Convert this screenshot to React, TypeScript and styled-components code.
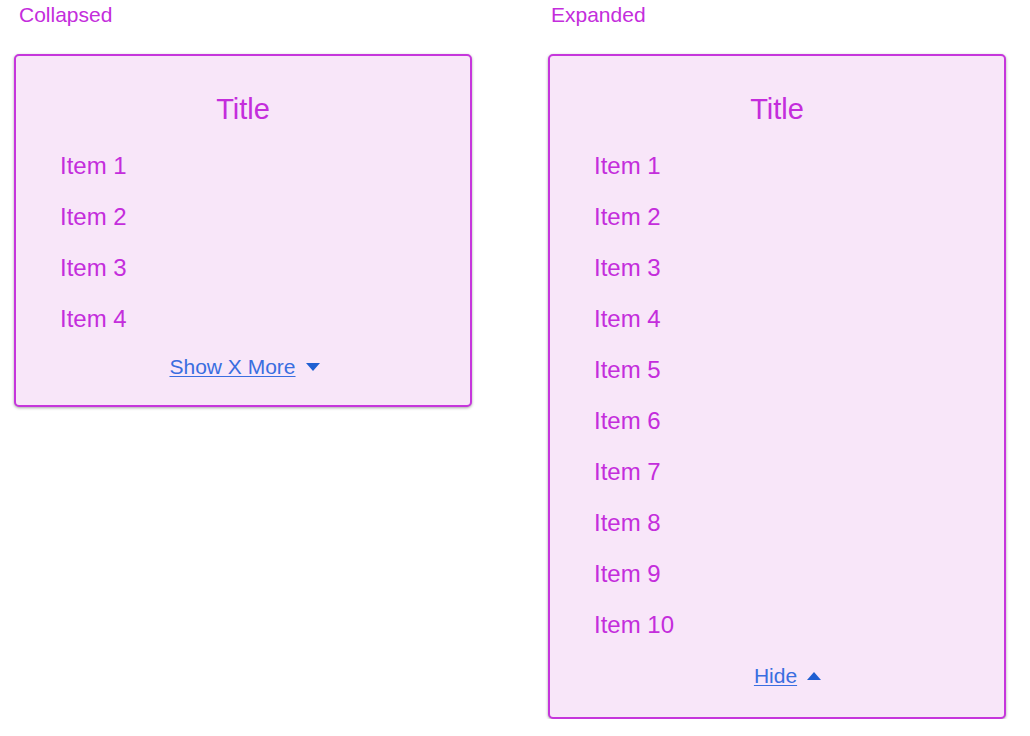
import React, { useState } from "react";
import styled, { createGlobalStyle } from "styled-components";

const GlobalStyle = createGlobalStyle`
  html, body {
    margin: 0;
    padding: 0;
    background: #ffffff;
  }
  body {
    font-family: Arial, "Liberation Sans", Helvetica, sans-serif;
  }
`;

const Page = styled.div`
  display: flex;
  align-items: flex-start;
  gap: 76px;
  padding: 2px 0 0 14px;
`;

const Column = styled.section`
  display: flex;
  flex-direction: column;
  width: 458px;
`;

const Label = styled.div<{ $indent: number }>`
  font-size: 21px;
  line-height: 26px;
  color: #c42ddc;
  padding-left: ${(p) => p.$indent}px;
  margin-bottom: 26px;
`;

const Card = styled.div<{ $expanded: boolean }>`
  box-sizing: border-box;
  display: flex;
  flex-direction: column;
  border: 2px solid #c636dc;
  border-radius: 5px;
  background: #f8e6f9;
  box-shadow: 0 1px 3px rgba(0, 0, 0, 0.35);
  padding: 37px 44px ${(p) => (p.$expanded ? 28 : 25)}px 44px;
`;

const Title = styled.h2`
  margin: 0;
  font-weight: normal;
  font-size: 29px;
  line-height: 32px;
  text-align: center;
  color: #c42ddc;
`;

const List = styled.ul`
  list-style: none;
  margin: 15px 0 0 0;
  padding: 0;
`;

const Item = styled.li`
  font-size: 24px;
  line-height: 51px;
  color: #c42ddc;
`;

const Toggle = styled.button<{ $expanded: boolean }>`
  align-self: center;
  display: flex;
  align-items: center;
  gap: 10px;
  margin: ${(p) => (p.$expanded ? "13px 0 0 21px" : "10px 0 0 3px")};
  padding: 0;
  border: 0;
  background: none;
  cursor: pointer;
  font-family: inherit;
  font-size: 21px;
  line-height: 26px;
  color: #3a6ee0;
`;

const ToggleText = styled.span`
  text-decoration: underline;
  text-underline-offset: 2px;
  text-decoration-thickness: 1px;
`;

const Caret = ({ up }: { up?: boolean }) => (
  <svg width="14" height="8" viewBox="0 0 14 8" aria-hidden="true">
    <path d={up ? "M0 8 L7 0 L14 8 Z" : "M0 0 L14 0 L7 8 Z"} fill="#1f5fd2" />
  </svg>
);

const ALL_ITEMS = Array.from({ length: 10 }, (_, i) => `Item ${i + 1}`);

function ItemList({ expanded: initial }: { expanded: boolean }) {
  const [expanded, setExpanded] = useState(initial);
  const shown = expanded ? ALL_ITEMS : ALL_ITEMS.slice(0, 4);
  return (
    <Card $expanded={expanded}>
      <Title>Title</Title>
      <List>
        {shown.map((t) => (
          <Item key={t}>{t}</Item>
        ))}
      </List>
      <Toggle $expanded={expanded} onClick={() => setExpanded(!expanded)}>
        <ToggleText>{expanded ? "Hide" : "Show X More"}</ToggleText>
        <Caret up={expanded} />
      </Toggle>
    </Card>
  );
}

export default function App() {
  return (
    <>
      <GlobalStyle />
      <Page>
        <Column>
          <Label $indent={5}>Collapsed</Label>
          <ItemList expanded={false} />
        </Column>
        <Column>
          <Label $indent={3}>Expanded</Label>
          <ItemList expanded={true} />
        </Column>
      </Page>
    </>
  );
}
